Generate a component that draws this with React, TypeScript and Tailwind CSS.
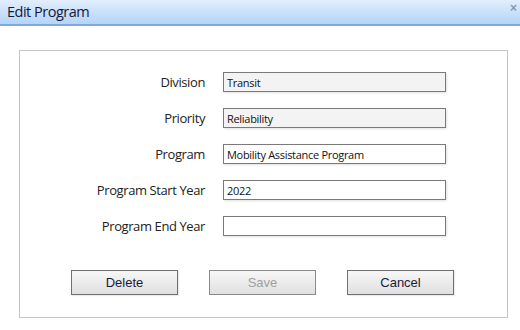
import React from "react";

const rows: { label: string; value: string; readOnly: boolean }[] = [
  { label: "Division", value: "Transit", readOnly: true },
  { label: "Priority", value: "Reliability", readOnly: true },
  { label: "Program", value: "Mobility Assistance Program", readOnly: false },
  { label: "Program Start Year", value: "2022", readOnly: false },
  { label: "Program End Year", value: "", readOnly: false },
];

export default function App() {
  return (
    <div className="w-[520px] h-[330px] bg-white overflow-hidden relative font-['Open_Sans','Noto_Sans',sans-serif]">
      <div className="h-[26px] bg-gradient-to-b from-[#e2eefd] to-[#b3d4f8] border-b-2 border-[#7fa9d8] flex items-center pl-[7px]">
        <span className="text-[14.5px] tracking-[-0.5px] text-[#15173a] leading-none">Edit Program</span>
      </div>
      <div className="absolute right-[3px] top-[2px] text-[12px] font-bold text-[#8a9aab] leading-none font-['Liberation_Sans',sans-serif]">
        ×
      </div>
      <div className="ml-[19px] mt-[24px] w-[489px] h-[268px] border border-[#c4c4c4] flex flex-col">
        <div className="flex flex-col gap-[16px] pt-[21px]">
          {rows.map((r) => (
            <div key={r.label} className="flex items-center h-[20px]">
              <div className="w-[185px] text-right text-[13px] tracking-[-0.4px] text-[#222] leading-none">{r.label}</div>
              <div
                className={`ml-[18px] w-[223px] h-[20px] border border-[#7a7a7a] shadow-[1px_1px_2px_rgba(0,0,0,0.12)] flex items-center pl-[3px] text-[11px] tracking-[-0.3px] text-[#111] leading-none ${
                  r.readOnly ? "bg-[#f3f3f3]" : "bg-white"
                }`}
              >
                {r.value}
              </div>
            </div>
          ))}
        </div>
        <div className="flex pl-[51px] gap-[31px] mt-[34px] font-['Liberation_Sans',Arial,sans-serif]">
          <button className="w-[107px] h-[25px] border border-[#707070] bg-gradient-to-b from-[#f7f7f7] to-[#e0e0e0] text-[13px] text-[#1a1a3a] shadow-[1px_1px_1px_rgba(0,0,0,0.08)]">
            Delete
          </button>
          <button className="w-[107px] h-[25px] border border-[#8a8a8a] bg-gradient-to-b from-[#f7f7f7] to-[#e0e0e0] text-[13px] text-[#a0a0a0]">
            Save
          </button>
          <button className="w-[107px] h-[25px] border border-[#707070] bg-gradient-to-b from-[#f7f7f7] to-[#e0e0e0] text-[13px] text-[#1a1a3a] shadow-[1px_1px_1px_rgba(0,0,0,0.08)]">
            Cancel
          </button>
        </div>
      </div>
    </div>
  );
}
